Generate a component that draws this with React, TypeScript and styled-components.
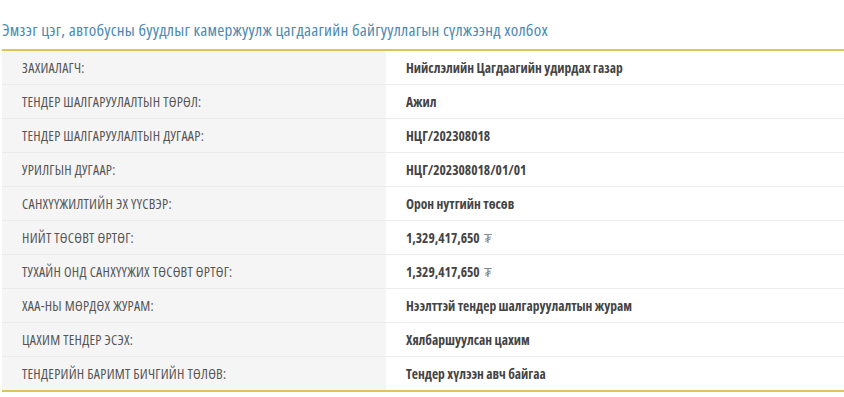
import React from 'react';
import styled, { createGlobalStyle } from 'styled-components';

const GlobalStyle = createGlobalStyle`
  html, body {
    margin: 0;
    padding: 0;
    background: #ffffff;
  }
  body {
    font-family: "Open Sans", "Liberation Sans", sans-serif;
    font-stretch: 75%;
  }
`;

const Page = styled.div`
  padding: 19px 0 0 2px;
`;

const Title = styled.h3`
  margin: 0 0 9px 0;
  font-size: 17px;
  letter-spacing: 0.26px;
  font-weight: 400;
  line-height: 21px;
  color: #4a8ab3;
`;

const Table = styled.div`
  border-top: 2px solid #e3c25a;
  border-bottom: 2px solid #e3c25a;
`;

const Row = styled.div`
  display: grid;
  grid-template-columns: 384px 1fr;
  height: 33px;
  border-bottom: 1px solid #ececec;

  &:last-child {
    border-bottom: none;
  }
`;

const Label = styled.div`
  display: flex;
  align-items: center;
  padding-left: 20px;
  background: #f5f5f5;
  font-size: 14px;
  letter-spacing: 0.25px;
  color: #555555;
  text-transform: uppercase;
`;

const Value = styled.div`
  display: flex;
  align-items: center;
  padding-left: 20px;
  font-size: 13.5px;
  letter-spacing: 0;
  font-weight: 700;
  color: #444444;
`;

const Currency = styled.span`
  margin-left: 4px;
  font-weight: 400;
  color: #888888;
`;

const rows: { label: string; value: string; money?: boolean }[] = [
  { label: 'Захиалагч:', value: 'Нийслэлийн Цагдаагийн удирдах газар' },
  { label: 'Тендер шалгаруулалтын төрөл:', value: 'Ажил' },
  { label: 'Тендер шалгаруулалтын дугаар:', value: 'НЦГ/202308018' },
  { label: 'Урилгын дугаар:', value: 'НЦГ/202308018/01/01' },
  { label: 'Санхүүжилтийн эх үүсвэр:', value: 'Орон нутгийн төсөв' },
  { label: 'Нийт төсөвт өртөг:', value: '1,329,417,650', money: true },
  { label: 'Тухайн онд санхүүжих төсөвт өртөг:', value: '1,329,417,650', money: true },
  { label: 'ХАА-ны мөрдөх журам:', value: 'Нээлттэй тендер шалгаруулалтын журам' },
  { label: 'Цахим тендер эсэх:', value: 'Хялбаршуулсан цахим' },
  { label: 'Тендерийн баримт бичгийн төлөв:', value: 'Тендер хүлээн авч байгаа' },
];

const App: React.FC = () => {
  return (
    <>
      <GlobalStyle />
      <Page>
        <Title>Эмзэг цэг, автобусны буудлыг камержуулж цагдаагийн байгууллагын сүлжээнд холбох</Title>
        <Table>
          {rows.map((row, i) => (
            <Row key={i}>
              <Label>{row.label}</Label>
              <Value>
                {row.value}
                {row.money && <Currency>₮</Currency>}
              </Value>
            </Row>
          ))}
        </Table>
      </Page>
    </>
  );
};

export default App;
